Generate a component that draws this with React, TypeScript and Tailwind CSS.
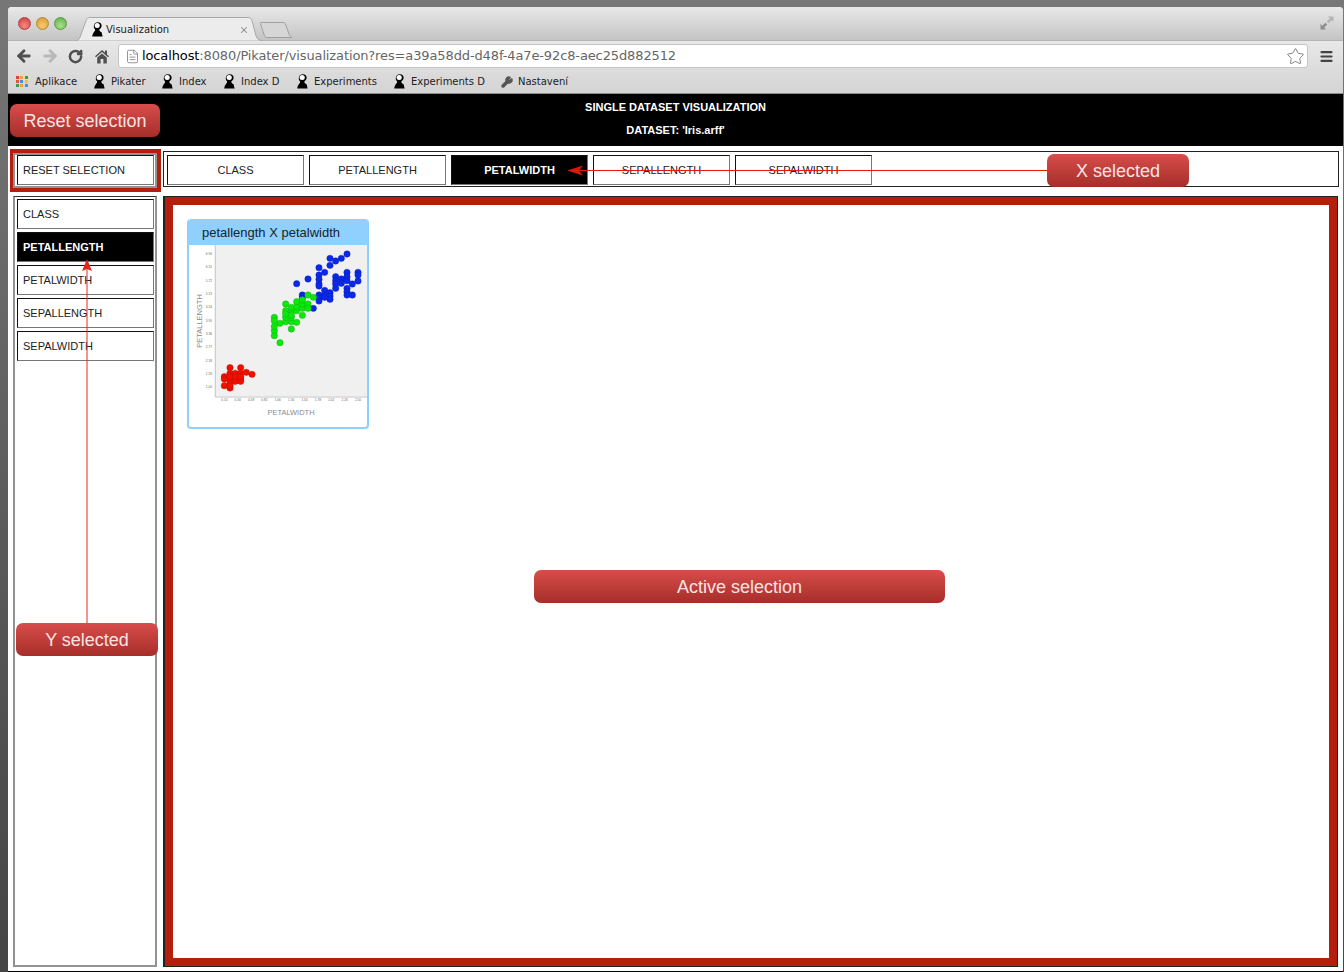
import { ArrowLeft, ArrowRight, FileText, Menu, RotateCw, Star, Wrench, X } from "lucide-react";

const COLUMNS = ["CLASS", "PETALLENGTH", "PETALWIDTH", "SEPALLENGTH", "SEPALWIDTH"];

const BOOKMARKS = [
  { label: "Pikater", width: "w-[68px]" },
  { label: "Index", width: "w-[62px]" },
  { label: "Index D", width: "w-[73px]" },
  { label: "Experiments", width: "w-[97px]" },
  { label: "Experiments D", width: "w-[107px]" },
];

// scatter points, in coordinates of a 3x crop around the card
const RED = [
  [180, 473], [212, 473], [163, 500], [180, 490], [196, 490], [212, 490], [229, 487], [246, 493], [163, 507],
  [180, 507], [196, 507], [212, 507], [163, 527], [180, 520], [196, 514], [212, 514], [180, 534], [180, 500],
  [196, 500], [212, 500], [180, 527],
];
const GREEN = [
  [330, 398], [313, 377], [313, 362], [313, 349], [313, 322], [313, 332], [330, 340], [347, 335], [347, 322],
  [347, 302], [347, 282], [364, 357], [364, 335], [364, 322], [364, 305], [364, 292], [380, 337], [380, 302],
  [380, 290], [380, 275], [397, 316], [397, 295], [397, 282], [397, 270], [414, 255], [414, 282], [414, 295],
  [430, 262], [347, 312], [364, 315],
];
const BLUE = [
  [531, 132], [514, 145], [497, 153], [480, 145], [480, 166], [447, 173], [464, 187], [447, 195], [447, 208],
  [447, 222], [447, 228], [380, 221], [414, 207], [397, 255], [397, 264], [430, 295], [447, 255], [447, 265],
  [447, 273], [464, 241], [464, 255], [464, 262], [480, 248], [480, 258], [480, 268], [497, 200], [497, 212],
  [497, 222], [497, 235], [514, 207], [514, 220], [531, 187], [531, 200], [531, 212], [531, 235], [531, 245],
  [531, 255], [547, 222], [547, 255], [564, 187], [564, 195], [564, 213],
];

const Y_TICKS = ["6.90", "6.31", "5.72", "5.13", "4.54", "3.95", "3.36", "2.77", "2.18", "1.59", "1.00"];
const X_TICKS = ["0.10", "0.34", "0.58", "0.82", "1.06", "1.30", "1.54", "1.78", "2.02", "2.26", "2.50"];

function Favicon() {
  return (
    <svg width="12" height="15" viewBox="0 0 12 15" className="shrink-0">
      <path
        d="M6.8 0.3C9.4 0.3 10.8 2 10.6 4.1C10.4 5.8 9.4 6.7 8.4 7.2C8.2 8.6 8.9 9.6 10.6 10.3L11.6 14.6H1.2C1.4 12.6 2.2 11 3.2 9.8C4 8.9 4.4 8 3.9 7C2.9 6.2 2.6 4.9 2.9 3.4C3.3 1.5 4.8 0.3 6.8 0.3Z"
        fill="#000"
      />
      <ellipse cx="6.2" cy="3.6" rx="2.6" ry="2.5" fill="#fff" />
    </svg>
  );
}

function AppsIcon() {
  const colors = ["#d9453a", "#e8a23a", "#3f9a4a", "#e2543d", "#4a8be0", "#f0c23a", "#3f9a4a", "#e8a23a", "#4a8be0"];
  return (
    <div className="grid grid-cols-3 gap-px w-[12px] h-[12px] shrink-0">
      {colors.map((c, i) => (
        <span key={i} className="block w-[3px] h-[3px]" style={{ background: c }} />
      ))}
    </div>
  );
}

function HomeIcon() {
  return (
    <svg width="14" height="15" viewBox="0 0 14 15" className="shrink-0 ml-[12px]">
      <path d="M7 1L10 3.6V1.6H12V5.4L14 7.2L13 8.2L7 3L1 8.2L0 7.2Z" fill="#505050" />
      <path d="M2.2 8.6L7 4.5L11.8 8.6V14.5H8.4V10H5.6V14.5H2.2Z" fill="#505050" />
    </svg>
  );
}

function FullscreenIcon() {
  return (
    <svg width="14" height="14" viewBox="0 0 14 14" className="absolute right-[9px] top-[9px]">
      <path d="M8 0.5H13.5V6L11.6 4.2L8.6 7.2L6.8 5.4L9.8 2.4Z" fill="#b4b4b4" />
      <path d="M0.5 13.5V8L2.4 9.8L5.4 6.8L7.2 8.6L4.2 11.6L6 13.5Z" fill="#8c8c8c" />
    </svg>
  );
}

function Chart() {
  const px = (v: number) => 170 + v / 3;
  const py = (v: number) => 210 + v / 3;
  return (
    <svg width="178" height="182" viewBox="189 245 178 182" className="block">
      <rect x="215.3" y="245" width="151.7" height="151.5" fill="#f0f0f0" />
      <path d="M215.3 245V397H367" fill="none" stroke="#c4c4c4" strokeWidth="1" />
      {Y_TICKS.map((t, i) => (
        <text key={t} x="212" y={py(132 + i * 40) + 1} textAnchor="end" fontSize="3.2" fill="#666">
          {t}
        </text>
      ))}
      {X_TICKS.map((t, i) => (
        <text key={t} x={px(163 + i * 40.1)} y="400.5" textAnchor="middle" fontSize="3.2" fill="#666">
          {t}
        </text>
      ))}
      <text x="291" y="415" textAnchor="middle" fontSize="7.5" fill="#8c8c8c">
        PETALWIDTH
      </text>
      <text x="0" y="0" transform="translate(202 321) rotate(-90)" textAnchor="middle" fontSize="7.5" fill="#8c8c8c">
        PETALLENGTH
      </text>
      {RED.map(([x, y], i) => (
        <circle key={i} cx={px(x)} cy={py(y)} r="3.2" fill="#f01000" stroke="#b80c00" strokeWidth="0.4" />
      ))}
      {BLUE.map(([x, y], i) => (
        <circle key={i} cx={px(x)} cy={py(y)} r="3.2" fill="#0a28e8" stroke="#0a1fb0" strokeWidth="0.4" />
      ))}
      {GREEN.map(([x, y], i) => (
        <circle key={i} cx={px(x)} cy={py(y)} r="3.2" fill="#0ce80c" stroke="#0aa80a" strokeWidth="0.4" />
      ))}
    </svg>
  );
}

function Callout({ label, className }: { label: string; className: string }) {
  return (
    <div
      className={`absolute flex items-center justify-center pt-[1px] rounded-[7px] bg-gradient-to-b from-[#d84d4b] to-[#a62e29] text-[18px] text-[#fbe3e3] ${className}`}
    >
      {label}
    </div>
  );
}

function AttrButton({ label, active, center }: { label: string; active?: boolean; center?: boolean }) {
  return (
    <div
      className={`flex items-center w-[137px] h-[30px] shrink-0 border border-[#111] border-r-[#777] border-b-[#777] text-[11px] ${
        center ? "justify-center" : "pl-[5px]"
      } ${active ? "bg-black text-white font-bold" : "bg-white text-[#222]"}`}
    >
      {label}
    </div>
  );
}

export default function App() {
  return (
    <div className="relative w-[1344px] h-[972px] overflow-hidden bg-gradient-to-b from-[#777777] to-[#444444] pt-[7px] pl-[8px] font-['Liberation_Sans',sans-serif]">
      <div className="flex flex-col w-[1335px] h-[965px] bg-white rounded-t-[4px] overflow-hidden border-b border-black">
        {/* tab strip */}
        <div className="relative flex items-start h-[33px] shrink-0 bg-gradient-to-b from-[#e9e9e9] to-[#c4c4c4]">
          <div className="flex gap-[5px] pl-[10px] pt-[10px]">
            <span className="w-[13px] h-[13px] rounded-full border border-[#b04040] bg-[radial-gradient(circle_at_50%_70%,#f58a85,#cf3a38)]" />
            <span className="w-[13px] h-[13px] rounded-full border border-[#b08a30] bg-[radial-gradient(circle_at_50%_70%,#f7cd70,#d8952a)]" />
            <span className="w-[13px] h-[13px] rounded-full border border-[#5c9a40] bg-[radial-gradient(circle_at_50%_70%,#a8e08a,#5fae45)]" />
          </div>
          <svg width="186" height="24" viewBox="0 0 186 24" className="absolute left-[68px] top-[10px]">
            <path d="M0 23.5C2 23.5 3.5 22 4.5 19L10 3.5C10.8 1.5 12 0.5 14 0.5H172C174 0.5 175.2 1.5 176 3.5L180 19C181 22 183 23.5 186 23.5" fill="#ececec" stroke="#a8a8a8" />
          </svg>
          <svg width="34" height="16" viewBox="0 0 34 16" className="absolute left-[251px] top-[15px]">
            <path d="M2 0.5H24C25.5 0.5 26 1 26.5 2L30 12C30.5 14 31 15 33 15.5H8C6.5 15.5 6 15 5.5 14L1.5 2C1.2 1 1.5 0.5 2 0.5Z" fill="#d6d6d6" stroke="#a0a0a0" />
          </svg>
          <div className="absolute left-[83px] top-[15px] flex items-center gap-[3px] w-[158px]">
            <Favicon />
            <span className="font-['DejaVu_Sans',sans-serif] text-[10px] text-[#222]">Visualization</span>
            <X size={10} strokeWidth={2.5} className="ml-auto text-[#888]" />
          </div>
          <FullscreenIcon />
        </div>

        {/* toolbar */}
        <div className="flex items-center h-[30px] shrink-0 bg-gradient-to-b from-[#e8e8e8] to-[#dcdcdc] border-t border-[#b4b4b4] pt-[1px] pl-[7px] pr-[9px]">
          <ArrowLeft size={18} strokeWidth={3.8} className="text-[#505050]" />
          <ArrowRight size={18} strokeWidth={3.8} className="ml-[8px] text-[#b8b8b8]" />
          <RotateCw size={15} strokeWidth={4} className="ml-[9px] text-[#505050]" />
          <HomeIcon />
          <div className="flex items-center flex-1 h-[24px] ml-[9px] mr-[11px] bg-white rounded-[3px] border border-[#c4c4c4] pl-[6px] pr-[2px]">
            <FileText size={15} strokeWidth={1.25} className="text-[#777]" />
            <div className="ml-[2px] font-['DejaVu_Sans',sans-serif] text-[13px] tracking-[-0.12px] text-[#666] whitespace-nowrap">
              <span className="text-black">localhost</span>:8080/Pikater/visualization?res=a39a58dd-d48f-4a7e-92c8-aec25d882512
            </div>
            <Star size={19} strokeWidth={1} className="ml-auto text-[#666]" />
          </div>
          <Menu size={15} strokeWidth={3.5} className="text-[#444]" />
        </div>

        {/* bookmarks */}
        <div className="flex items-center h-[24px] shrink-0 bg-gradient-to-b from-[#dcdcdc] to-[#d4d4d4] border-b border-[#8c8c8c] pl-[8px] font-['DejaVu_Sans',sans-serif] text-[10px] text-[#222]">
          <div className="flex items-center gap-[7px] w-[77px]">
            <AppsIcon />
            <span>Aplikace</span>
          </div>
          {BOOKMARKS.map((b) => (
            <div key={b.label} className={`flex items-center gap-[6px] shrink-0 ${b.width}`}>
              <Favicon />
              <span>{b.label}</span>
            </div>
          ))}
          <div className="flex items-center gap-[5px] ml-[1px]">
            <Wrench size={12} strokeWidth={3} className="text-[#555] fill-[#555]" />
            <span>Nastavení</span>
          </div>
        </div>

        {/* page title */}
        <div className="flex flex-col items-center h-[52px] shrink-0 bg-black pt-[7px] text-[11px] font-bold text-white">
          <div className="h-[12px] leading-[12px]">SINGLE DATASET VISUALIZATION</div>
          <div className="mt-[11px] h-[12px] leading-[12px]">DATASET: 'Iris.arff'</div>
        </div>

        {/* x axis row */}
        <div className="flex items-start gap-[2px] h-[46px] shrink-0 pl-[2px] pr-[4px] pt-[3px]">
          <div className="w-[151px] h-[43px] shrink-0 border-[4px] border-l-[3px] border-[#b51d0c]">
            <div className="w-[144px] h-[35px] border-2 border-[#939393] pl-[2px]">
              <AttrButton label="RESET SELECTION" />
            </div>
          </div>
          <div className="flex items-start gap-[5px] flex-1 h-[36px] mt-[2px] border border-[#222] pl-[3px] pt-[3px]">
            {COLUMNS.map((c) => (
              <AttrButton key={c} label={c} center active={c === "PETALWIDTH"} />
            ))}
          </div>
        </div>

        {/* main area */}
        <div className="flex gap-[6px] flex-1 min-h-0 pl-[5px] pr-[5px] pt-[4px] pb-[4px]">
          <div className="flex flex-col gap-[3px] w-[144px] shrink-0 border-2 border-t border-[#939393] border-t-[#333] p-[2px]">
            {COLUMNS.map((c) => (
              <AttrButton key={c} label={c} active={c === "PETALLENGTH"} />
            ))}
          </div>
          <div className="flex-1 min-w-0 border border-l-2 border-[#222] bg-white">
            <div className="w-full h-full border-[8px] border-[#b51d0c] pl-[14px] pt-[14px]">
              <div className="w-[182px] h-[210px] rounded-[4px] border-2 border-t-0 border-[#8fd0ff] overflow-hidden">
                <div className="flex items-center justify-center h-[26px] pt-[2px] pr-[14px] bg-[#8fd0ff] text-[13px] text-[#222]">
                  petallength X petalwidth
                </div>
                <Chart />
              </div>
            </div>
          </div>
        </div>
      </div>

      {/* annotations */}
      <svg width="1344" height="972" viewBox="0 0 1344 972" className="absolute left-0 top-0 pointer-events-none">
        <path d="M87 623V262" stroke="#e8281c" strokeWidth="1" />
        <path d="M87 259L92 271L87 269L82 271Z" fill="#e0281c" />
        <path d="M1048 170.5H575" stroke="#e8180c" strokeWidth="1" />
        <path d="M567 170.5L583 165.5L579 170.5L583 175.5Z" fill="#d8180c" />
      </svg>
      <Callout label="Reset selection" className="left-[10px] top-[104px] w-[150px] h-[33px]" />
      <Callout label="X selected" className="left-[1047px] top-[154px] w-[142px] h-[33px]" />
      <Callout label="Y selected" className="left-[16px] top-[623px] w-[142px] h-[33px]" />
      <Callout label="Active selection" className="left-[534px] top-[570px] w-[411px] h-[33px]" />
    </div>
  );
}
